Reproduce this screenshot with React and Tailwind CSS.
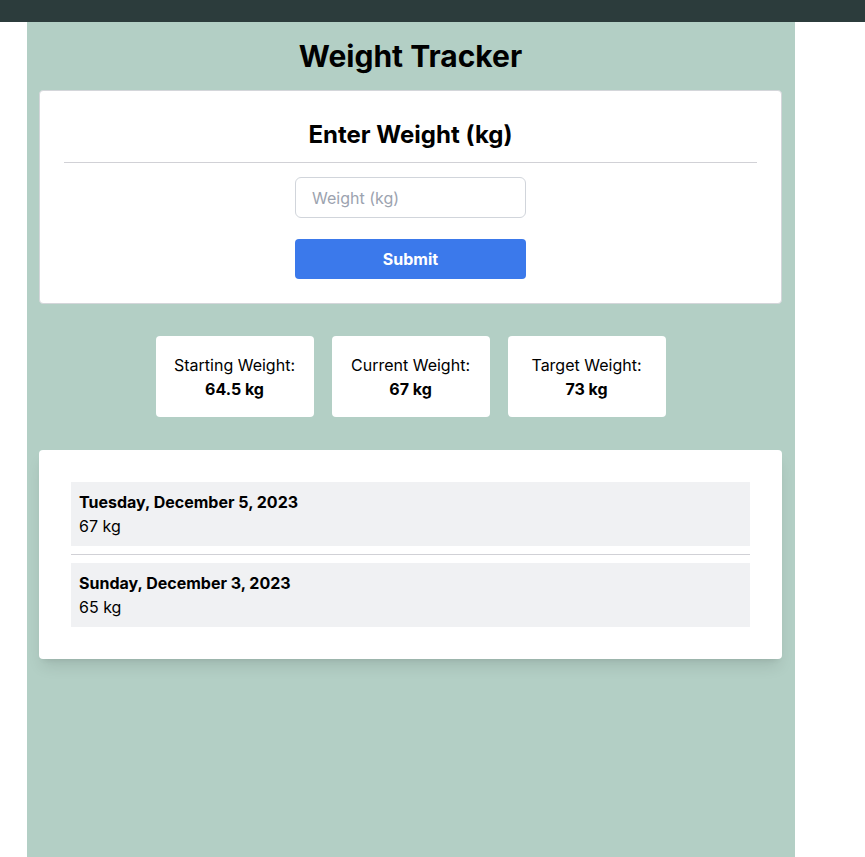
const stats = [
  { label: 'Starting Weight:', value: '64.5 kg' },
  { label: 'Current Weight:', value: '67 kg' },
  { label: 'Target Weight:', value: '73 kg' },
];

const entries = [
  { date: 'Tuesday, December 5, 2023', weight: '67 kg' },
  { date: 'Sunday, December 3, 2023', weight: '65 kg' },
];

export default function App() {
  return (
    <div className="min-h-screen bg-white text-black" style={{ fontFamily: 'Inter, "Noto Sans", sans-serif' }}>
      <div className="h-[22px] bg-[#2c3c3c]" />
      <main className="ml-[27px] w-[768px] min-h-[835px] bg-[#b3cfc5] pl-3 pr-[13px] pb-10">
        <h1 className="pt-[16px] pb-[16px] text-center text-[30px] font-bold leading-9">Weight Tracker</h1>

        <section className="rounded border border-[#d4d6da] bg-white px-6 pt-[28px] pb-6">
          <h2 className="text-center text-[24px] font-bold leading-8">Enter Weight (kg)</h2>
          <hr className="mt-[11px] border-[#d1d1d6]" />
          <form className="mt-[14px] flex flex-col items-center" onSubmit={(e) => e.preventDefault()}>
            <input
              type="number"
              placeholder="Weight (kg)"
              className="h-[41px] w-[231px] rounded-md border border-[#d1d5db] px-4 text-base placeholder:text-[#9ca3af] outline-none"
            />
            <button
              type="submit"
              className="mt-[21px] h-[40px] w-[231px] rounded bg-[#3b79eb] text-base font-bold text-white"
            >
              Submit
            </button>
          </form>
        </section>

        <div className="mt-[32px] flex justify-center gap-[18px]">
          {stats.map((s) => (
            <div key={s.label} className="h-[81px] w-[158px] rounded bg-white pt-[17px] text-center text-base leading-6">
              <div>{s.label}</div>
              <div className="font-bold">{s.value}</div>
            </div>
          ))}
        </div>

        <section className="mt-[33px] rounded bg-white p-8 shadow-lg">
          {entries.map((e, i) => (
            <div key={e.date}>
              {i > 0 && <hr className="my-2 border-[#d1d1d6]" />}
              <div className="bg-[#f0f1f3] p-2 text-base leading-6">
                <div className="font-bold">{e.date}</div>
                <div>{e.weight}</div>
              </div>
            </div>
          ))}
        </section>
      </main>
    </div>
  );
}
